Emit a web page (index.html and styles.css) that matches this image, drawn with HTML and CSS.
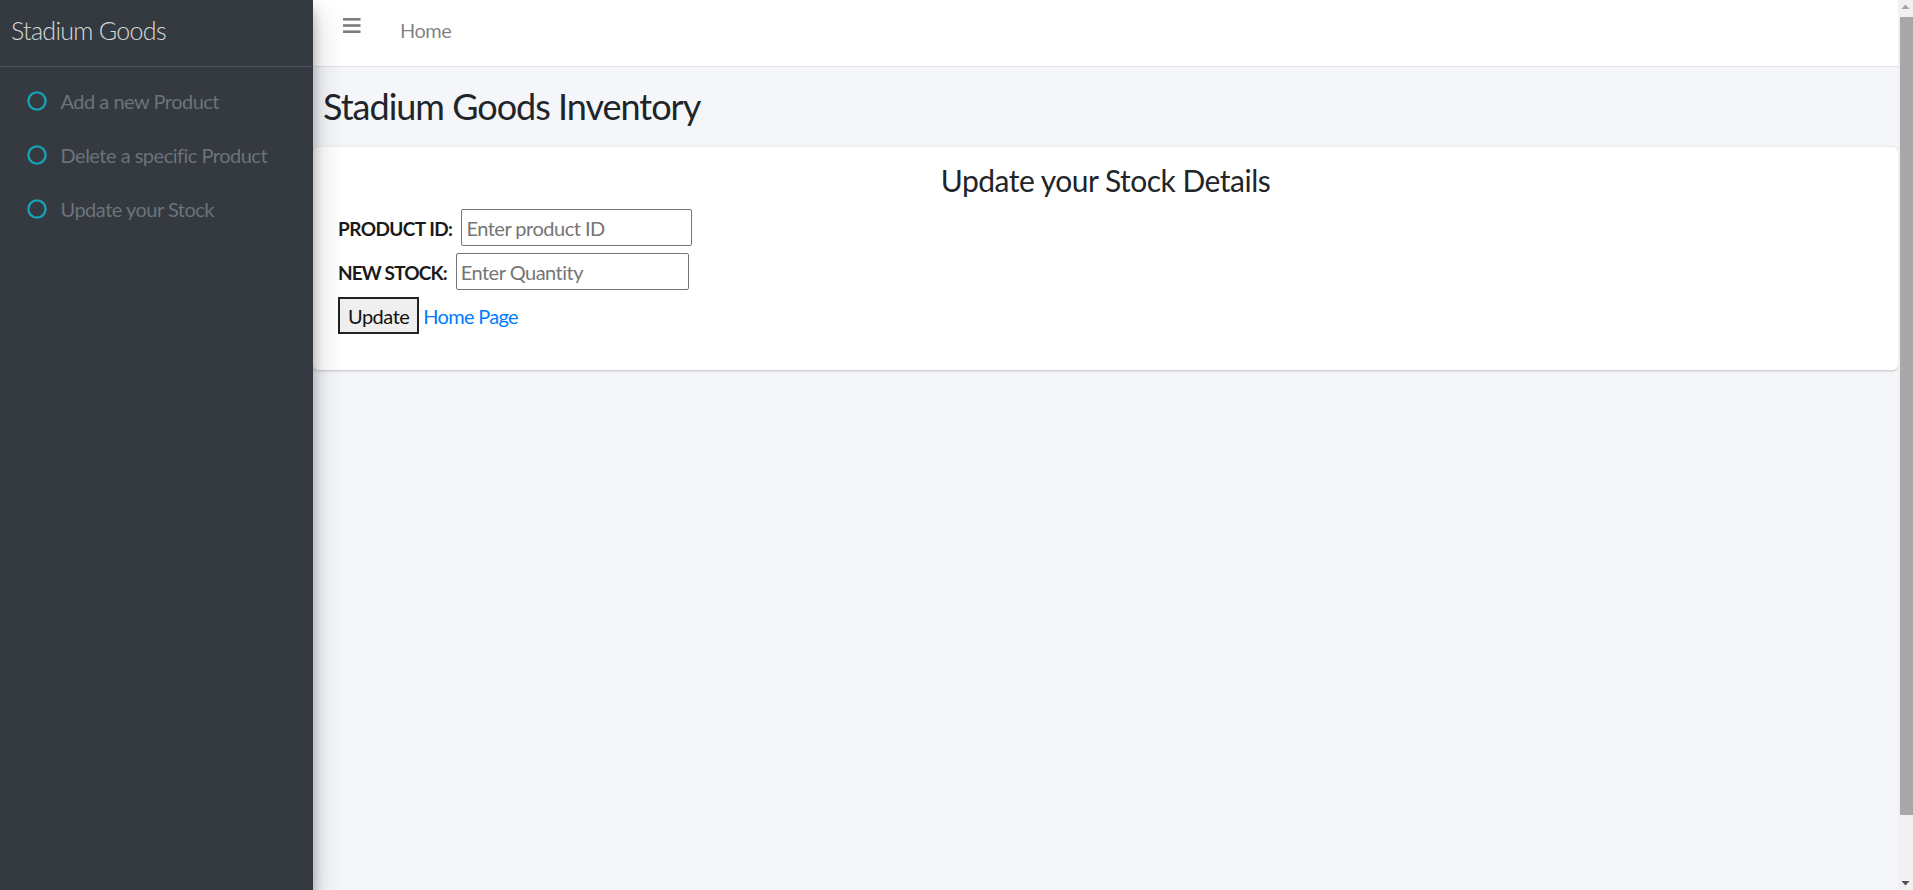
FILE: index.html
```html
<!DOCTYPE html>
<html lang="en">
<head>
<meta charset="utf-8">
<title>Stadium Goods Inventory</title>
<link rel="stylesheet" href="styles.css">
</head>
<body>
<div class="wrapper">
  <aside class="sidebar">
    <div class="brand">Stadium Goods</div>
    <nav class="side-nav">
      <a class="side-link" href="#">
        <svg class="nav-icon" width="22" height="22" viewBox="0 0 22 22"><circle cx="11" cy="11" r="8.6" fill="none" stroke="#17a2b8" stroke-width="2.3"/></svg>
        <span>Add a new Product</span>
      </a>
      <a class="side-link" href="#">
        <svg class="nav-icon" width="22" height="22" viewBox="0 0 22 22"><circle cx="11" cy="11" r="8.6" fill="none" stroke="#17a2b8" stroke-width="2.3"/></svg>
        <span>Delete a specific Product</span>
      </a>
      <a class="side-link" href="#">
        <svg class="nav-icon" width="22" height="22" viewBox="0 0 22 22"><circle cx="11" cy="11" r="8.6" fill="none" stroke="#17a2b8" stroke-width="2.3"/></svg>
        <span>Update your Stock</span>
      </a>
    </nav>
  </aside>
  <div class="main">
    <header class="topbar">
      <a class="burger" href="#" aria-label="menu">
        <svg width="18" height="15" viewBox="0 0 18 15"><rect x="0" y="0" width="17.5" height="2.6" fill="#7d7d7d"/><rect x="0" y="6.2" width="17.5" height="2.6" fill="#7d7d7d"/><rect x="0" y="12.4" width="17.5" height="2.6" fill="#7d7d7d"/></svg>
      </a>
      <a class="top-link" href="#">Home</a>
    </header>
    <section class="content-header">
      <h1>Stadium Goods Inventory</h1>
    </section>
    <section class="card">
      <h4 class="card-title">Update your Stock Details</h4>
      <form class="stock-form">
        <div class="row">
          <label class="lbl">PRODUCT ID:</label>
          <input class="field field-id" type="text" placeholder="Enter product ID">
        </div>
        <div class="row">
          <label class="lbl lbl-stock">NEW STOCK:</label>
          <input class="field field-qty" type="text" placeholder="Enter Quantity">
        </div>
        <div class="row row-actions">
          <button class="btn" type="button">Update</button>
          <a class="home-link" href="#">Home Page</a>
        </div>
      </form>
    </section>
  </div>
</div>
<div class="scrollbar" aria-hidden="true">
  <svg class="arrow-up" width="15" height="15" viewBox="0 0 15 15"><polygon points="3.5,9 11.5,9 7.5,4.5" fill="#a3a3a3"/></svg>
  <div class="thumb"></div>
  <svg class="arrow-down" width="15" height="15" viewBox="0 0 15 15"><polygon points="3.5,6 11.5,6 7.5,10.5" fill="#505050"/></svg>
</div>
</body>
</html>
```
FILE: styles.css
```css
* { box-sizing: border-box; }

body {
  margin: 0;
  font-family: Lato, "Noto Sans", sans-serif;
  font-size: 20px;
  letter-spacing: -0.025em;
  color: #212529;
  background: #f4f6f9;
}

a { text-decoration: none; }

.wrapper {
  display: flex;
  min-height: 100vh;
  padding-right: 15px;
}

/* Sidebar */
.sidebar {
  position: relative;
  z-index: 2;
  width: 313px;
  flex: 0 0 313px;
  background: #343a40;
  box-shadow: 0 14px 28px rgba(0,0,0,.25), 0 10px 10px rgba(0,0,0,.22);
}

.brand {
  height: 67px;
  padding: 15px 11px 0;
  font-size: 25px;
  line-height: 30px;
  font-weight: 300;
  letter-spacing: -0.028em;
  color: rgba(255,255,255,.82);
  border-bottom: 1px solid #4b545c;
}

.side-nav {
  display: flex;
  flex-direction: column;
  gap: 4px;
  padding-top: 9px;
}

.side-link {
  display: flex;
  align-items: center;
  height: 50px;
  padding: 0 0 0 26px;
  color: #6c737b;
  font-size: 20px;
  line-height: 30px;
}

.nav-icon {
  flex: 0 0 22px;
  margin-right: 13px;
  margin-left: -0.5px;
}

/* Main */
.main {
  flex: 1;
  min-width: 0;
  display: flex;
  flex-direction: column;
}

.topbar {
  height: 67px;
  background: #fff;
  border-bottom: 1px solid #dee2e6;
  display: flex;
  align-items: flex-start;
  padding: 18px 0 0 30px;
}

.burger {
  display: block;
  width: 18px;
  height: 15px;
  line-height: 0;
}

.top-link {
  margin-left: 39px;
  font-size: 20px;
  line-height: 24px;
  color: rgba(0,0,0,.5);
}

.content-header {
  padding: 18px 10px 19px;
}

.content-header h1 {
  margin: 0;
  font-size: 36px;
  line-height: 43px;
  font-weight: 400;
  letter-spacing: -0.028em;
  color: #212529;
}

.card {
  background: #fff;
  border-radius: 5px;
  box-shadow: 0 0 1px rgba(0,0,0,.125), 0 1px 3px rgba(0,0,0,.2);
  padding: 15px 25px 36px;
}

.card-title {
  margin: 0;
  text-align: center;
  font-size: 30px;
  line-height: 36px;
  font-weight: 400;
  color: #212529;
}

.stock-form {
  display: flex;
  flex-direction: column;
  gap: 7px;
  margin-top: 11px;
}

.row {
  display: flex;
  align-items: baseline;
  gap: 9px;
}

.lbl {
  font-weight: 700;
  font-size: 19px;
  letter-spacing: -0.03em;
  color: #1a1a1a;
}

.lbl-stock { letter-spacing: -0.045em; }

.field {
  height: 37px;
  border: 1px solid #767676;
  border-radius: 2px;
  padding: 0 4px;
  font-family: inherit;
  font-size: 20px;
  letter-spacing: -0.025em;
  color: #212529;
  background: #fff;
}

.field::placeholder { color: #757575; }

.field-id { width: 231px; }
.field-qty { width: 233px; }

.row-actions { gap: 4px; }

.btn {
  height: 37px;
  padding: 0 8px;
  border: 2px solid #222;
  background: #efefef;
  font-family: inherit;
  font-size: 20px;
  letter-spacing: -0.025em;
  color: #111;
}

.home-link {
  color: #007bff;
  font-size: 20px;
  letter-spacing: -0.035em;
}

/* Scrollbar look of the viewport */
.scrollbar {
  position: fixed;
  top: 0;
  right: 0;
  width: 15px;
  height: 100vh;
  background: #f1f1f1;
  display: flex;
  flex-direction: column;
}

.arrow-up, .arrow-down { flex: 0 0 15px; display: block; }

.thumb {
  height: 798px;
  margin: 2px 0 0 2px;
  background: #a8a8a8;
}

.arrow-down { margin-top: auto; }
```
